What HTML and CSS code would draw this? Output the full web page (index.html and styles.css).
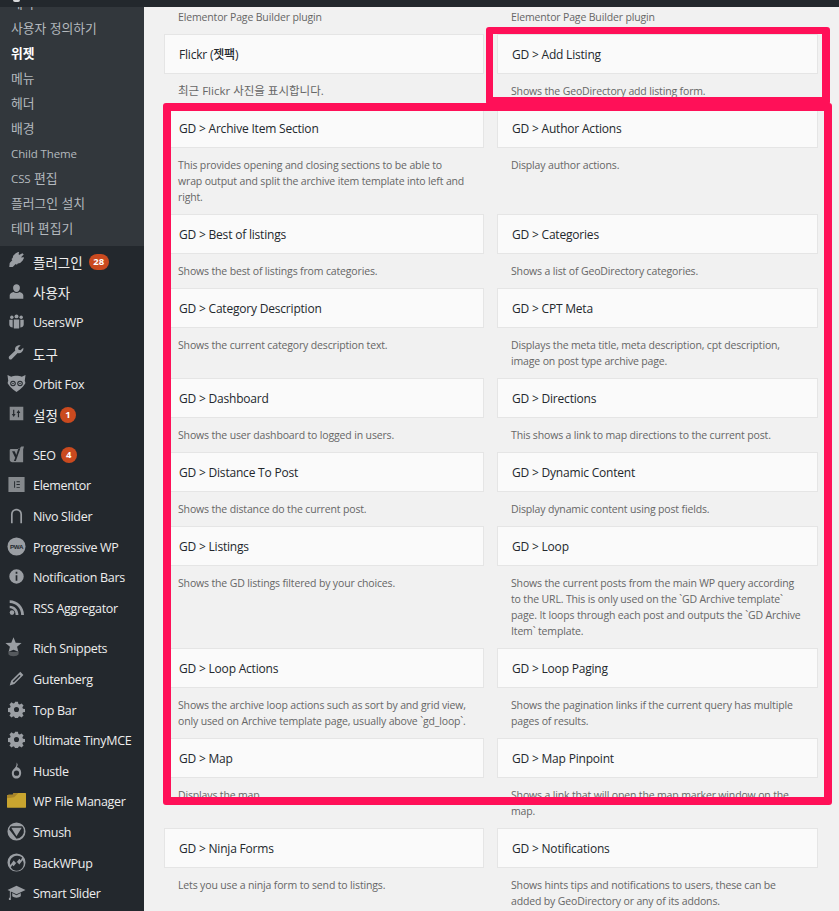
FILE: index.html
```html
<!DOCTYPE html>
<html lang="ko">
<head>
<meta charset="utf-8">
<title>위젯</title>
<link rel="stylesheet" href="styles.css">
</head>
<body>
<div class="topbar"><span class="topicon"></span></div>
<div class="layout">
  <nav class="sidebar">
    <ul class="submenu">
      <li class="clipped">테마</li>
      <li>사용자 정의하기</li>
      <li class="current">위젯</li>
      <li>메뉴</li>
      <li>헤더</li>
      <li>배경</li>
      <li><span class="lat">Child Theme</span></li>
      <li><span class="lat">CSS</span> 편집</li>
      <li>플러그인 설치</li>
      <li>테마 편집기</li>
    </ul>
    <ul class="menu">
      <li class="ko"><span class="ic"><svg viewBox="0 0 20 20"><path d="M17 1.500l1.500 1.500-3.200 3.200 1.200.4 1.500-.6.800 1-1.500 3-3 3-2.800.6-1 1.400-1.400-.9-3.600 3.400H1.500l.5-4.500 3-3.400-.9-1.400 1.400-1 .6-2.800 3-3 3-1.500 1 .8-.6 1.500.4 1.200z"/></svg></span>플러그인<b class="badge b28">28</b></li>
      <li class="ko"><span class="ic"><svg viewBox="0 0 20 20"><path d="M10 1.500a4 4 0 0 1 4 4.300c0 2.300-1.700 4.700-4 4.700s-4-2.400-4-4.700a4 4 0 0 1 4-4.300zM6.500 10.500c1 .8 2.200 1.300 3.500 1.300s2.500-.5 3.500-1.300c2.500.4 4.500 2 4.500 4V18.500H2V14.500c0-2 2-3.600 4.500-4z"/></svg></span>사용자</li>
      <li><span class="ic"><svg viewBox="0 0 20 20"><circle cx="4.500" cy="5" r="2"/><circle cx="10" cy="4" r="2.300"/><circle cx="15.500" cy="5" r="2"/><path d="M1.500 8h4v9c-2 0-4-1.500-4-3.500zM6.800 7.500h6.400V18c-1 .5-5.400.5-6.400 0zM14.500 8h4v5.500c0 2-2 3.500-4 3.500z"/></svg></span>UsersWP</li>
      <li class="ko"><span class="ic"><svg viewBox="0 0 20 20"><path d="M18 4.500l-3.300 2.900-2.300-.5-.5-2.300 3-3c-2.100-.6-4.400 0-5.700 1.600-1.100 1.400-1.200 3.200-.6 4.300L1.500 14.500c-.8.800-.8 2.200 0 3s2.200.8 3 0l6.900-7c1.300.5 3.200.4 4.600-.7 1.600-1.200 2.500-3.600 2-5.300z"/></svg></span>도구</li>
      <li><span class="ic wide"><svg viewBox="0 0 20 20"><path d="M.5 1l4 1.800C6 2 8 1.800 10 1.800s4 .2 5.500 1L19.500 1l-.8 6c.6 1 .8 2 .5 3l-2.500 3.500c-1.600 1.800-4.400 4-6.700 5.500-2.300-1.500-5.100-3.700-6.700-5.500L.8 10c-.3-1 0-2 .5-3z"/><circle cx="6.300" cy="10" r="2.900" fill="#23282d"/><circle cx="13.700" cy="10" r="2.900" fill="#23282d"/><circle cx="6.300" cy="10" r="1.800"/><circle cx="13.700" cy="10" r="1.800"/><circle cx="6.300" cy="10" r=".8" fill="#23282d"/><circle cx="13.700" cy="10" r=".8" fill="#23282d"/></svg></span>Orbit Fox</li>
      <li class="ko sep-after"><span class="ic"><svg viewBox="0 0 20 20"><path class="dim" fill-rule="evenodd" d="M2 2h16v16H2zM6 5.500v5H4.500l2.200 3.500 2.200-3.500H7.400v-5zM13 14.500v-5h1.500L12.300 6l-2.200 3.500h1.500v5z"/></svg></span>설정<b class="badge b1">1</b></li>
      <li><span class="ic"><svg viewBox="0 0 20 20"><path class="dim" fill-rule="evenodd" d="M3.500 3.500h9.500l2.800-3h3l-1 3.500v15H5c-1.500 0-3-1-3-2.800V5c0-.8.800-1.500 1.500-1.500zM7.500 6.300H4.800l3.700 7.400-1.600 3.800h2.300L14.500 3h-2.300L9.700 10.600 8 6.500z"/></svg></span>SEO<b class="badge b4">4</b></li>
      <li><span class="ic wide"><svg viewBox="0 0 20 20"><path class="dim" fill-rule="evenodd" d="M1.500 2h17v16h-17zM7.500 6.500v7h1v-7zM10 6.500v1h3.500v-1zM10 9.500v1h3.500v-1zM10 12.500v1h3.500v-1z"/></svg></span>Elementor</li>
      <li><span class="ic"><svg viewBox="0 0 20 20"><path class="line" d="M4.500 19V8.500a5.500 5.500 0 0 1 11 0V19"/></svg></span>Nivo Slider</li>
      <li><span class="ic wide"><svg viewBox="0 0 20 20"><circle cx="10" cy="10" r="9.500"/><text x="10" y="12.300" class="pwa">PWA</text></svg></span>Progressive WP</li>
      <li><span class="ic"><svg viewBox="0 0 20 20"><path fill-rule="evenodd" d="M10 1.500a8.500 8.500 0 1 1 0 17 8.500 8.500 0 0 1 0-17zM9 4.500v2.300h2V4.500zM9 8.500v6.500h2V8.500z"/></svg></span>Notification Bars</li>
      <li class="sep-after"><span class="ic"><svg viewBox="0 0 20 20"><circle cx="4.700" cy="16" r="2.700"/><path d="M2 7.800v3.200c3.800 0 7 3 7 7.800h3.300C12.300 12.500 8 7.800 2 7.800z"/><path d="M2 1.500v3.300c7.500 0 13.500 6.200 13.500 14h3.300C18.800 9 11.300 1.500 2 1.500z"/></svg></span>RSS Aggregator</li>
      <li><span class="ic star"><svg viewBox="0 0 20 24"><path d="M10 0l2.600 6.400 6.900.4-5.300 4.400 1.500 5.800L10 14.500l-5.700 2.500 1.500-5.800L.5 6.800l6.900-.4z"/><path class="fade" d="M4 16c1.500 1.800 10.500 1.800 12 0v4c-1.500 3-10.500 3-12 0z"/></svg></span>Rich Snippets</li>
      <li><span class="ic"><svg viewBox="0 0 20 20"><path fill-rule="evenodd" d="M14.500 2.200l3.600 3.600L7.500 16.500l-5.500 1.700 1.700-5.500zM13.500 5.500l-8 8 1.300 1.300 8-8z"/></svg></span>Gutenberg</li>
      <li><span class="ic"><svg viewBox="0 0 20 20"><path fill-rule="evenodd" d="M8.300 1h3.400l.5 2.500 1.600.7 2.200-1.400 2.300 2.400-1.400 2.100.7 1.700 2.400.5v3.300l-2.400.5-.7 1.700 1.400 2.100-2.400 2.300-2.100-1.400-1.700.7-.5 2.500H8.300l-.5-2.500-1.600-.7-2.100 1.400-2.400-2.300 1.400-2.100-.7-1.700-2.400-.5V8.300l2.400-.5.7-1.700-1.400-2.100 2.400-2.400 2.100 1.400 1.600-.7zM10 7a3 3 0 1 0 0 6 3 3 0 0 0 0-6z"/></svg></span>Top Bar</li>
      <li><span class="ic"><svg viewBox="0 0 20 20"><path fill-rule="evenodd" d="M8.300 1h3.400l.5 2.500 1.600.7 2.200-1.400 2.300 2.400-1.400 2.100.7 1.700 2.400.5v3.300l-2.400.5-.7 1.700 1.400 2.100-2.400 2.300-2.100-1.400-1.700.7-.5 2.500H8.300l-.5-2.500-1.600-.7-2.100 1.400-2.400-2.300 1.400-2.100-.7-1.700-2.400-.5V8.300l2.400-.5.7-1.700-1.400-2.100 2.400-2.400 2.100 1.400 1.600-.7zM10 7a3 3 0 1 0 0 6 3 3 0 0 0 0-6z"/></svg></span>Ultimate TinyMCE</li>
      <li><span class="ic"><svg viewBox="0 0 20 20"><path fill-rule="evenodd" d="M10 .5c1.800 1.800 1.800 3.500.3 5.300 3.300.8 5.200 3.500 5.200 6.700 0 4-2.500 7-5.700 7s-5.300-2.600-5.300-6.200c0-2.600 1.300-4.500 3.500-6.300C9.700 5 10.500 3 10 .5zM10 10a3.100 3.100 0 1 0 0 6.200 3.100 3.100 0 0 0 0-6.200z"/></svg></span>Hustle</li>
      <li><span class="ic wide"><svg viewBox="0 0 20 20"><path class="folder" d="M0 4.500l2-.5h4l1-1.800h12.500a.500.500 0 0 1 .5.500v14.300a.500.500 0 0 1-.500.500H.500a.500.500 0 0 1-.500-.500z"/><path class="folder-dark" d="M0 7.500l7.500-1 4.500-4.300H7L6 4H2L0 4.500z"/></svg></span>WP File Manager</li>
      <li><span class="ic wide"><svg viewBox="0 0 20 20"><path fill-rule="evenodd" d="M10 .5a9.500 9.500 0 1 1 0 19 9.500 9.500 0 0 1 0-19zM4 4.500A8 8 0 0 0 2.300 8L10 17.500A8 8 0 0 0 17.700 8 8 8 0 0 0 16 4.500zM4.500 6h11L10 15z"/></svg></span>Smush</li>
      <li><span class="ic wide"><svg viewBox="0 0 20 20"><path fill-rule="evenodd" d="M10 .5a9.500 9.500 0 1 1 0 19 9.500 9.500 0 0 1 0-19zM10 3a7 7 0 0 0-6.500 9.500L7 8l2.500 2.500L13 6l1.500 1.500L16 4.800A7 7 0 0 0 10 3zm6.500 4.500L13 12l-2.500-2.500L7 14l-1.500-1.500L4 15.200A7 7 0 0 0 16.500 7.500z"/></svg></span>BackWPup</li>
      <li><span class="ic wide"><svg viewBox="0 0 20 20"><path d="M10 3L.5 7.300 3 8.400v7.100H2V18h2V9l6 2.800 9.500-4.500z"/><path d="M5.500 10.500v3.500c2 2 7 2 9 0v-3.500L10 12.800z"/></svg></span>Smart Slider</li>
    </ul>
  </nav>
  <main class="content">
    <div class="grid">
      <div class="widget"><div class="title">Elementor Library</div><p class="desc">Elementor Page Builder plugin</p></div>
      <div class="widget"><div class="title">Elementor Library</div><p class="desc">Elementor Page Builder plugin</p></div>
      <div class="widget"><div class="title">Flickr (젯팩)</div><p class="desc ko-desc">최근 Flickr 사진을 표시합니다.</p></div>
      <div class="widget"><div class="title">GD &gt; Add Listing</div><p class="desc">Shows the GeoDirectory add listing form.</p></div>
      <div class="widget"><div class="title">GD &gt; Archive Item Section</div><p class="desc">This provides opening and closing sections to be able to<br>wrap output and split the archive item template into left and<br>right.</p></div>
      <div class="widget"><div class="title">GD &gt; Author Actions</div><p class="desc">Display author actions.</p></div>
      <div class="widget"><div class="title">GD &gt; Best of listings</div><p class="desc">Shows the best of listings from categories.</p></div>
      <div class="widget"><div class="title">GD &gt; Categories</div><p class="desc">Shows a list of GeoDirectory categories.</p></div>
      <div class="widget"><div class="title">GD &gt; Category Description</div><p class="desc">Shows the current category description text.</p></div>
      <div class="widget"><div class="title">GD &gt; CPT Meta</div><p class="desc">Displays the meta title, meta description, cpt description, image on post type archive page.</p></div>
      <div class="widget"><div class="title">GD &gt; Dashboard</div><p class="desc">Shows the user dashboard to logged in users.</p></div>
      <div class="widget"><div class="title">GD &gt; Directions</div><p class="desc">This shows a link to map directions to the current post.</p></div>
      <div class="widget"><div class="title">GD &gt; Distance To Post</div><p class="desc">Shows the distance do the current post.</p></div>
      <div class="widget"><div class="title">GD &gt; Dynamic Content</div><p class="desc">Display dynamic content using post fields.</p></div>
      <div class="widget"><div class="title">GD &gt; Listings</div><p class="desc">Shows the GD listings filtered by your choices.</p></div>
      <div class="widget"><div class="title">GD &gt; Loop</div><p class="desc">Shows the current posts from the main WP query according<br>to the URL. This is only used on the `GD Archive template`<br>page. It loops through each post and outputs the `GD Archive<br>Item` template.</p></div>
      <div class="widget"><div class="title">GD &gt; Loop Actions</div><p class="desc">Shows the archive loop actions such as sort by and grid view, only used on Archive template page, usually above `gd_loop`.</p></div>
      <div class="widget"><div class="title">GD &gt; Loop Paging</div><p class="desc">Shows the pagination links if the current query has multiple pages of results.</p></div>
      <div class="widget"><div class="title">GD &gt; Map</div><p class="desc">Displays the map.</p></div>
      <div class="widget"><div class="title">GD &gt; Map Pinpoint</div><p class="desc">Shows a link that will open the map marker window on the map.</p></div>
      <div class="widget"><div class="title">GD &gt; Ninja Forms</div><p class="desc">Lets you use a ninja form to send to listings.</p></div>
      <div class="widget"><div class="title">GD &gt; Notifications</div><p class="desc">Shows hints tips and notifications to users, these can be added by GeoDirectory or any of its addons.</p></div>
    </div>
  </main>
</div>
<div class="mark mark-a"></div>
<div class="mark mark-b"></div>
</body>
</html>
```
FILE: styles.css
```css
html, body { margin: 0; padding: 0; height: 911px; overflow: hidden; background: #f1f1f1; }
body { font-family: "Open Sans", "Noto Sans CJK KR", sans-serif; position: relative; }
ul { list-style: none; margin: 0; padding: 0; }
.topbar { position: absolute; left: 0; top: 0; width: 100%; height: 7px; background: #23282d; z-index: 3; }
.topicon { display: block; width: 7px; height: 2px; margin-left: 13px; background: #d8dadc; border-radius: 0 0 4px 4px; }
.layout { display: flex; height: 911px; overflow: hidden; }
.sidebar { width: 144px; flex: none; background: #23282d; overflow: hidden; }
.submenu { background: #32373c; margin-top: -8.500px; height: 254.500px; box-sizing: border-box; }
.submenu li { height: 24.900px; line-height: 25px; padding-left: 11px; font-size: 12.800px; color: #b4b9be; white-space: nowrap; }
.submenu li.clipped { line-height: 22px; }
.submenu li.current { color: #fff; font-weight: 700; }
.lat { font-size: 11.500px; letter-spacing: -.1px; }
.menu li { height: 30.600px; display: flex; align-items: center; padding: 1px 0 0 33px; font-size: 12.500px; letter-spacing: -.3px; color: #eee; white-space: nowrap; position: relative; box-sizing: border-box; }
.menu li.ko { font-size: 13.500px; letter-spacing: 0; }
.menu li.sep-after { margin-bottom: 10px; }
.ic { position: absolute; left: 8px; top: 50%; margin-top: -9px; width: 17px; height: 17px; }
.ic.wide { left: 7px; margin-top: -10px; width: 19px; height: 19px; }
.ic.star { left: 5px; margin-top: -11px; width: 17px; height: 21px; }
.ic svg { display: block; width: 100%; height: 100%; fill: #9a9ea3; }
.ic .dim { fill: #85898d; }
.ic .fade { fill: #55595d; }
.ic .line { fill: none; stroke: #9a9ea3; stroke-width: 2; }
.ic .folder { fill: #c9a52f; }
.ic .folder-dark { fill: #a9862a; }
.pwa { font: 700 6.500px "Liberation Sans", sans-serif; fill: #23282d; text-anchor: middle; }
.badge { display: inline-block; margin-left: 6px; min-width: 20px; height: 16px; line-height: 16px; padding: 0 1px; box-sizing: border-box; border-radius: 8px; background: #ca4a1f; color: #fff; font-size: 9.500px; font-weight: 700; text-align: center; letter-spacing: 0; }
.badge.b1 { margin-left: 2px; min-width: 16px; }
.badge.b4 { margin-left: 5px; min-width: 16px; }
.content { flex: 1; min-width: 0; padding: 0 21px 0 20px; }
.grid { display: grid; grid-template-columns: 320px 321px; column-gap: 13px; margin-top: -40px; }
.widget { min-height: 74px; }
.title { height: 40px; line-height: 40px; box-sizing: border-box; background: #fafafa; border: 1px solid #e5e5e5; padding-left: 14px; font-size: 12px; font-weight: 500; letter-spacing: -.2px; color: #23282d; }
.desc { margin: 0; padding: 9px 11px 9px 14px; font-size: 10.500px; letter-spacing: -.15px; line-height: 16px; color: #666; }
.ko-desc { font-size: 11.500px; letter-spacing: 0; }
.mark { position: absolute; box-sizing: border-box; border-style: solid; border-color: #ff1058; border-radius: 3px; z-index: 2; }
.mark-a { left: 486px; top: 27px; width: 344px; height: 78px; border-width: 7px 8px 8px 7px; }
.mark-b { left: 163px; top: 103px; width: 669px; height: 702px; border-width: 8px; }
```
